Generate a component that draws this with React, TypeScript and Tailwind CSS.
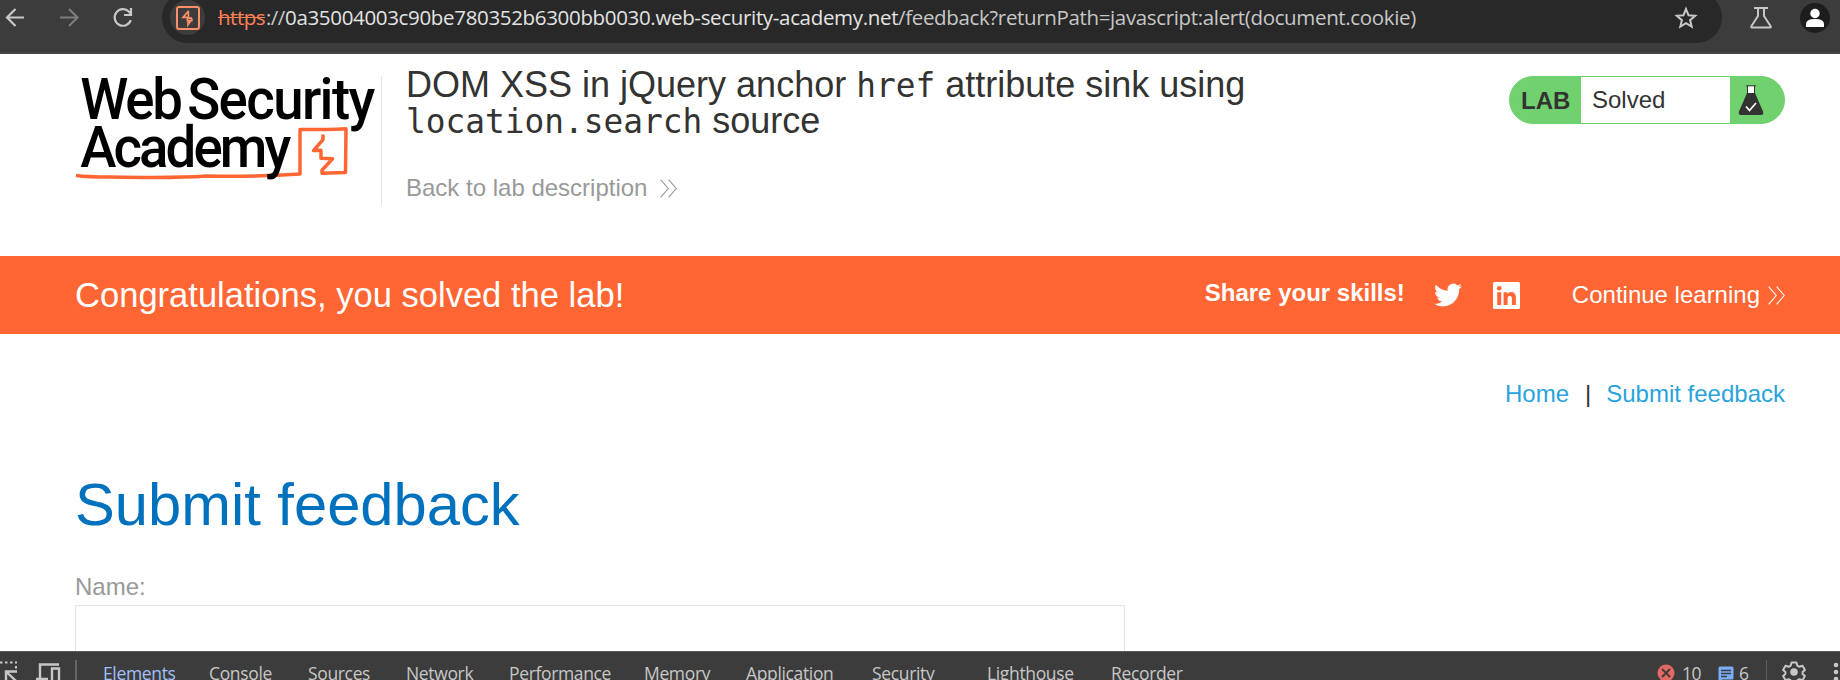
import React from "react";

function BurpTile() {
  return (
    <svg className="h-6 w-6" viewBox="0 0 24 24" fill="none" stroke="#ff8f66" strokeWidth="2">
      <rect x="1" y="1" width="22" height="22" rx="2" />
      <path d="M12.6 4.8 7 11.4h4.4v3.2h5.2M12.4 5v7.2h3.6M16.4 12.6 12 18.8v-5" strokeWidth="1.7" />
    </svg>
  );
}

function Chevrons({ color, width }: { color: string; width: number }) {
  return (
    <svg width={width} height="19" viewBox="0 0 17 19" preserveAspectRatio="none" fill="none" stroke={color} strokeWidth="1.1">
      <path d="M.6.6 8.2 9.5.6 18.4M8.6.6l7.6 8.9-7.6 8.9" />
    </svg>
  );
}

function Toolbar() {
  return (
    <header className="flex h-[54px] shrink-0 items-start overflow-hidden border-b-2 border-[#484646] bg-[#3c3c3c]">
      <svg className="h-[36px] w-[162px] shrink-0" viewBox="0 0 162 36" fill="none" strokeWidth="2.2">
        <path d="M24 17.5H8M15.5 9 7 17.5l8.500 8.500" stroke="#c7c7c7" />
        <path d="M60 17.500h16.500M69 9l8.500 8.500L69 26" stroke="#7c7c7c" />
        <path d="M130.800 20.200A8.300 8.300 0 1 1 129 11.700l1.700 2M131 8v7h-7" stroke="#c7c7c7" />
      </svg>
      <div className="-mt-2 flex h-[51px] w-[1560px] shrink-0 items-center rounded-full bg-[#282828] pl-2">
        <div className="flex h-[35px] w-[35px] items-center justify-center rounded-full bg-[#3c3c3c]">
          <BurpTile />
        </div>
        <div className="-mt-[2px] ml-[13px] flex whitespace-pre font-['Open_Sans',sans-serif] text-[20.5px] leading-[30px]">
          <span className="w-[48px] tracking-[-0.5px] text-[#ff8057] line-through decoration-1">https</span>
          <span className="w-[19px] tracking-[-0.6px] text-[#c7c7c7]">://</span>
          <span className="w-[613px] tracking-[-0.33px] text-[#e3e3e3]">0a35004003c90be780352b6300bb0030.web-security-academy.net</span>
          <span className="w-[520px] tracking-[-0.35px] text-[#c7c7c7]">/feedback?returnPath=javascript:alert(document.cookie)</span>
        </div>
        <svg className="ml-auto mr-6 h-6 w-6" viewBox="0 0 24 24" fill="none" stroke="#c7c7c7" strokeWidth="2">
          <path d="m12 3 2.500 6.200 6.700.6-5.100 4.400 1.600 6.500L12 17.200l-5.700 3.500 1.600-6.500-5.100-4.400 6.700-.6z" />
        </svg>
      </div>
      <svg className="ml-[27px] mt-[6px] h-6 w-6" viewBox="0 0 24 24" fill="none" stroke="#c7c7c7" strokeWidth="2">
        <path d="M5 2h14M9 2v8L2.500 20q-.8 1.500 .5 1.500h18q1.300 0 .5-1.500L15 10V2" />
      </svg>
      <svg className="ml-[27px] mt-[3px] h-[30px] w-[30px]" viewBox="0 0 30 30">
        <circle cx="15" cy="15" r="15" fill="#1c1d1d" />
        <circle cx="15" cy="10.500" r="4.700" fill="#fff" />
        <path d="M6 24v-3q0-5 9-5t9 5v3z" fill="#fff" />
      </svg>
    </header>
  );
}

function Logo() {
  return (
    <svg className="h-[129px] w-[307px] shrink-0" viewBox="75 76 307 129" fill="none">
      <path
        d="M76 175.500q10 1.500 35 1.500 65 1.300 95-1 50 1 94-2V129.500q20 .3 46-.8L345.500 172.500l-23.500.8v-3l10.500-11.500-11.500-.5v-8l-7.500.3 9.500-11v-5"
        stroke="#ff6633"
        strokeWidth="3.500"
        strokeLinejoin="round"
      />
      <g transform="scale(.95 1)" fill="#000" fontFamily="Roboto, sans-serif" fontWeight="500" fontSize="57.500">
        <text x="84.500" y="119" textLength="108" lengthAdjust="spacing">Web</text>
        <text x="197" y="119" textLength="198" lengthAdjust="spacing">Security</text>
        <text x="84.500" y="167.500" textLength="222" lengthAdjust="spacing">Academy</text>
      </g>
      <path d="M381.500 76v129" stroke="#e2e2e2" />
    </svg>
  );
}

function LabBadge() {
  return (
    <div className="flex h-12 w-[276px] overflow-hidden rounded-full border border-[#71d16f] bg-[#71d16f] text-2xl text-[#333332]">
      <div className="w-[71px] pl-[11px] pt-px font-bold leading-[46px]">LAB</div>
      <div className="w-[149px] bg-white pl-[11px] leading-[46px]">Solved</div>
      <svg className="ml-2 mt-2 h-[31px] w-[26px]" viewBox="0 0 26 31">
        <path d="M9.500 1h7v8h-7z" fill="#fff" />
        <path d="M8 .8h10M9.500 1v8M16.500 1v8" stroke="#333332" fill="none" />
        <path d="M9 8h8l8 18.500q1 3.500-2 3.500H3q-3 0-2-3.500z" fill="#333332" />
        <path d="m8 21.500 3.500 4L18 18" stroke="#fff" strokeWidth="1.700" fill="none" />
      </svg>
    </div>
  );
}

function LabHeader() {
  return (
    <section className="flex h-[202px] shrink-0 items-start pl-[75px] pr-[55px] pt-[22px]">
      <Logo />
      <div className="-mt-[9px] ml-[24px] flex-1">
        <h2 className="text-4xl leading-[36px] text-[#333332]">
          DOM XSS in jQuery anchor{" "}
          <span className="font-['DejaVu_Sans_Mono',monospace] text-[32.8px] leading-[0]">href</span> attribute sink using
          <br />
          <span className="font-['DejaVu_Sans_Mono',monospace] text-[32.8px] leading-[0]">location.search</span> source
        </h2>
        <a className="mt-[31px] flex items-center text-2xl leading-[36px] text-[#999]">
          <span className="mr-[13px]">Back to lab description</span>
          <Chevrons color="#999" width={17} />
        </a>
      </div>
      <LabBadge />
    </section>
  );
}

function Banner() {
  return (
    <section className="flex h-[78px] shrink-0 items-center bg-[#ff6633] pl-[75px] pr-[55px] text-2xl text-white">
      <p className="mr-auto text-[34.55px]">Congratulations, you solved the lab!</p>
      <b className="-mt-1">Share your skills!</b>
      <svg className="ml-[29px] h-7 w-7" viewBox="0 0 24 24" fill="#fff">
        <path d="M23.953 4.570a10 10 0 0 1-2.825.775 4.958 4.958 0 0 0 2.163-2.723c-.951.555-2.005.959-3.127 1.184a4.920 4.920 0 0 0-8.384 4.482C7.690 8.095 4.067 6.130 1.640 3.162a4.822 4.822 0 0 0-.666 2.475c0 1.710.870 3.213 2.188 4.096a4.904 4.904 0 0 1-2.228-.616v.060a4.923 4.923 0 0 0 3.946 4.827 4.996 4.996 0 0 1-2.212.085 4.936 4.936 0 0 0 4.604 3.417 9.867 9.867 0 0 1-6.102 2.105c-.390 0-.779-.023-1.170-.067a13.995 13.995 0 0 0 7.557 2.209c9.053 0 13.998-7.496 13.998-13.985 0-.210 0-.420-.015-.630A9.935 9.935 0 0 0 24 4.590z" />
      </svg>
      <svg className="ml-[31px] h-[27px] w-[27px]" viewBox="0 0 27 27">
        <rect width="27" height="27" rx="1.500" fill="#fff" />
        <g fill="#ff6633">
          <circle cx="6.200" cy="6.300" r="2.300" />
          <path d="M4.200 10.300h4V23h-4zM10.600 10.300h3.800V12c2-3.200 8.500-2.800 8.500 3.500V23h-4v-6.500c0-4-4.300-3.500-4.300 0V23h-4z" />
        </g>
      </svg>
      <span className="ml-[52px] mr-2">Continue learning</span>
      <Chevrons color="#fff" width={17} />
    </section>
  );
}

const tabs = [
  { label: "Elements", cls: "w-[106px] text-[#a3c0fb]" },
  { label: "Console", cls: "w-[99px]" },
  { label: "Sources", cls: "w-[98px]" },
  { label: "Network", cls: "w-[103px]" },
  { label: "Performance", cls: "w-[135px]" },
  { label: "Memory", cls: "w-[102px]" },
  { label: "Application", cls: "w-[126px]" },
  { label: "Security", cls: "w-[115px]" },
  { label: "Lighthouse", cls: "w-[124px]" },
  { label: "Recorder", cls: "w-[80px]" },
];

function DevTools() {
  return (
    <footer className="flex h-[29px] shrink-0 items-start overflow-hidden border-t border-[#5c5c5c] bg-[#3c3c3c] font-['Open_Sans',sans-serif] text-[17.5px] leading-[24px] text-[#c7c7c7]">
      <svg className="h-7 w-[103px] shrink-0" viewBox="0 0 103 28" fill="none" stroke="#c7c7c7" strokeWidth="2">
        <path d="M0 10.500h17M16 14v5" strokeDasharray="2.500 2.500" />
        <path d="M17 19.500H6V30M6.500 20 17 30" strokeWidth="2.400" />
        <path d="M59 12.500H40V27M36 27h12" strokeWidth="2.400" />
        <path d="M52 16.500h7V30h-7z" strokeWidth="2.400" />
        <path d="M76 8v20" stroke="#666" />
      </svg>
      <nav className="flex pt-[9px]">
        {tabs.map((t) => (
          <span key={t.label} className={`shrink-0 tracking-[-0.35px] ${t.cls}`}>
            {t.label}
          </span>
        ))}
      </nav>
      <svg className="ml-auto mt-3 h-[18px] w-[18px] shrink-0" viewBox="0 0 18 18">
        <circle cx="9" cy="9" r="8.500" fill="#e46962" />
        <path d="m5 5 8 8M13 5l-8 8" stroke="#3c3c3c" strokeWidth="1.800" />
      </svg>
      <span className="ml-[7px] w-[19px] pt-[9px] tracking-[-0.5px]">10</span>
      <svg className="ml-[17px] mt-[14px] h-4 w-4 shrink-0" viewBox="0 0 16 16">
        <path d="M2 .5h12q1.500 0 1.500 1.500v10q0 1.500-1.500 1.500H4L.5 17V2Q.500.500 2 .500z" fill="#7cacf8" />
        <path d="M3 4.500h10M3 7.500h10M3 10.500h6" stroke="#3c3c3c" strokeWidth="1.500" />
      </svg>
      <span className="ml-[5px] w-[10px] pt-[9px]">6</span>
      <svg className="ml-[16px] h-7 w-[75px] shrink-0" viewBox="1765 652 75 28" fill="none" stroke="#c7c7c7">
        <path d="M1766.500 660v20" stroke="#5e5e5e" />
        <g transform="translate(1794 672)">
          <path
            d="M-2.500-9.500h5l.8 3.200 2 1.100 3.200-1 2.400 4.300-2.300 2v1.800l2.300 2-2.400 4.300-3.200-1-2 1.100-.8 3.200h-5l-.8-3.200-2-1.100-3.200 1-2.400-4.300 2.300-2v-1.800l-2.300-2 2.400-4.300 3.200 1 2-1.100z"
            strokeWidth="2"
            strokeLinejoin="round"
          />
          <circle r="3.800" fill="#c7c7c7" stroke="none" />
        </g>
        <g fill="#c7c7c7" stroke="none">
          <circle cx="1836" cy="665" r="2.300" />
          <circle cx="1836" cy="672" r="2.300" />
          <circle cx="1836" cy="679" r="2.300" />
        </g>
      </svg>
    </footer>
  );
}

export default function App() {
  return (
    <div className="flex h-[680px] w-[1840px] flex-col overflow-hidden bg-white font-['Liberation_Sans',Arial,sans-serif]">
      <Toolbar />
      <LabHeader />
      <Banner />
      <main className="flex h-[317px] shrink-0 flex-col overflow-hidden pl-[75px] pr-[55px] text-2xl">
        <nav className="mt-[42px] flex justify-end leading-[36px] text-[#29a3de]">
          <a>Home</a>
          <span className="ml-4 mr-[15px] text-[#333332]">|</span>
          <a>Submit feedback</a>
        </nav>
        <h1 className="mt-[57px] text-[59.7px] leading-[72px] text-[#0071bd]">Submit feedback</h1>
        <label className="mt-[28px] leading-[36px] text-[#999]">Name:</label>
        <div className="h-[60px] w-[1050px] shrink-0 border border-[#e2e2e2]" />
      </main>
      <DevTools />
    </div>
  );
}
